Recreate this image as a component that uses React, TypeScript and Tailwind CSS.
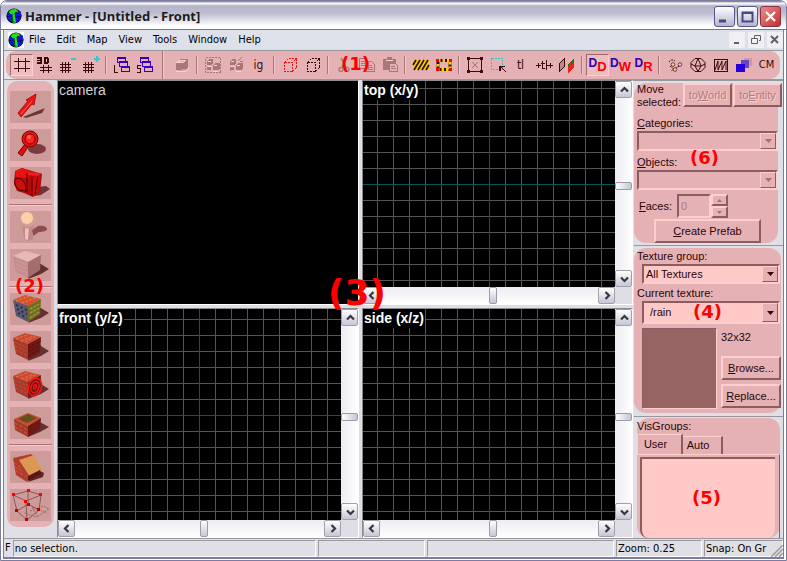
import React from "react";

const TAHOMA = "font-['DejaVu_Sans_Condensed','Noto_Sans',sans-serif]";

type Children = { children?: React.ReactNode };

/* ---------- shared drawing helpers ---------- */

function Ico({ children, size = 18, soft = false }: Children & { size?: number; soft?: boolean }) {
  return (
    <svg
      width={size}
      height={size}
      viewBox={`0 0 ${size} ${size}`}
      fill="none"
      shapeRendering={soft ? "auto" : "crispEdges"}
      aria-hidden="true"
      className="shrink-0"
    >
      {children}
    </svg>
  );
}

function Logo({ boxed = false }: { boxed?: boolean }) {
  return (
    <svg width="16" height="16" viewBox="0 0 16 16" aria-hidden="true" className={boxed ? "shrink-0 bg-white" : "shrink-0"}>
      <circle cx="8" cy="8" r="7.6" fill="#0a0a14" />
      <path d="M1.500 5L5 6v3L1 8zM9 6l5.500-3 1 5-6 1zM1 9l5 0v5L2.500 12zM9 10l6-1-1 3-3 2.500-2 .5z" fill="#1414e0" />
      <path d="M2.500 4.500 5 1.500 10 1l2.500 2.500-1 1.500-2-1L8.500 5l1.500 9.500-3.500.5L5.500 6.500z" fill="#17e020" />
      <path d="M6 6l1 9M9 5l3-1" stroke="#000" strokeWidth=".7" />
    </svg>
  );
}

/* ---------- toolbar icons ---------- */

const D = "#3a0a0c";

function GridIcon() {
  return (
    <Ico>
      <path d="M5.500 2v14M12.500 2v14M1 5.500h16M1 12.500h16" stroke={D} />
    </Ico>
  );
}
function Grid3DIcon() {
  return (
    <Ico>
      <path d="M1 1h5v7H1zM8 1h4v7H8z" fill={D} />
      <path d="M1 3.500h3M1 5.500h3M10 3v3M6.500 4v1" stroke="#e6b1b4" />
      <path d="M12 2h1v5h-1z" fill={D} />
      <path d="M7.500 9v8M12.500 9v8M4 11.500h12M4 14.500h12" stroke={D} />
    </Ico>
  );
}
function GridStepIcon({ plus = false }: { plus?: boolean }) {
  return (
    <Ico>
      <path d="M3.500 6v11M6.500 6v11M9.500 6v11M1 8.500h11M1 11.500h11M1 14.500h11" stroke={D} />
      <path d={plus ? "M12 3h6M15 0v6" : "M12 3h5"} stroke="#25cfd6" strokeWidth="2" />
    </Ico>
  );
}
function WindowsIcon({ load = false }: { load?: boolean }) {
  return (
    <Ico>
      <rect x="4.500" y="1.500" width="8" height="5" fill="#e6b1b4" stroke="#3600b8" />
      <rect x="6.500" y="5.500" width="8" height="5" fill="#e6b1b4" stroke="#3600b8" />
      <rect x="8.500" y="10.500" width="8" height="5" fill="#e6b1b4" stroke="#3600b8" />
      <path d="M4 2h9M6 6h9M8 11h9" stroke="#3600b8" strokeWidth="2" />
      <path d={load ? "M1.500 9v7.500H5" : "M5 9.500H1.500v3h3v4H1"} stroke={D} />
    </Ico>
  );
}
const G = "#a87878";
function SolidBoxIcon() {
  return (
    <Ico>
      <path d="M4 6l3-3h8v8l-3 3H3V9z" fill={G} />
      <path d="M5 6h6l2-2H8zM3 15h10l3-3" fill="#d8a0a0" stroke="#ffd0d0" />
    </Ico>
  );
}
function GroupIcon({ apart = false }: { apart?: boolean }) {
  return (
    <Ico>
      {!apart && <rect x="1.500" y="1.500" width="15" height="15" stroke={G} strokeDasharray="2 1" />}
      <path d="M3 5l2-2h4v4L7 9H3zM9 9l2-2h5v5l-2 2H9z" fill={G} />
      <path d="M3 11h4v3H3z" fill={G} />
      <path d="M4 5h3M10 9h3M4 10h3M9 15h5" stroke="#ffd0d0" />
      {apart && <path d="M11 5l4-4M3 15l4-4M13 5h3M3 12h3" stroke={G} />}
    </Ico>
  );
}
function DashedCubeIcon({ color }: { color: string }) {
  return (
    <Ico>
      <path d="M3.500 6.500h8v9h-8zM3.500 6.500l4-4h8l-4 4M15.500 2.500v9l-4 4" stroke={color} strokeDasharray="2 1" />
    </Ico>
  );
}
function CutIcon() {
  return (
    <Ico soft>
      <path d="M6 2l5 9M12 2l-5 9" stroke={G} strokeWidth="1.500" />
      <circle cx="6" cy="13.500" r="2" stroke={G} strokeWidth="1.300" />
      <circle cx="12" cy="13.500" r="2" stroke={G} strokeWidth="1.300" />
    </Ico>
  );
}
function CopyIcon() {
  return (
    <Ico>
      <path d="M1.500 2.500h6l3 3v7h-9zM8.500 5.500h5l3 3v7h-8z" fill="#e6b1b4" stroke={G} />
      <path d="M3 5.500h4M3 7.500h4M3 9.500h4M10 9.500h4M10 11.500h5M10 13.500h5" stroke={G} />
    </Ico>
  );
}
function PasteIcon() {
  return (
    <Ico>
      <path d="M2 3h13v11H2zM6 1h5v3H6z" fill={G} />
      <path d="M8.500 7.500h6l2 2v6h-8z" fill="#e6b1b4" stroke={G} />
      <path d="M10 10.500h4M10 12.500h5" stroke={G} />
      <path d="M5 4.500h7" stroke="#ffd0d0" />
    </Ico>
  );
}
function HazardIcon({ handles = false }: { handles?: boolean }) {
  return (
    <Ico soft>
      {handles ? (
        <>
          <path d="M3 4.500h12v9H3z" stroke="#2b1400" strokeWidth="3" />
          <path d="M3 4.500h12v9H3z" stroke="#ffcc08" strokeWidth="3" strokeDasharray="2.500 2" />
          <path d="M1 3h3v3H1zM14 3h3v3h-3zM1 12h3v3H1zM14 12h3v3h-3z" fill="#f00" />
        </>
      ) : (
        <>
          <path d="M1 4h16v10H1z" fill="#ffcc08" />
          <path d="M1 9l3-5M2 14l6-10M6 14l6-10M10 14l6-10M14 14l3-5" stroke="#2b1400" strokeWidth="1.700" />
        </>
      )}
    </Ico>
  );
}
function ScaleIcon() {
  return (
    <Ico>
      <rect x="2.500" y="2.500" width="13" height="13" stroke={D} />
      <path d="M1 1h3v3H1zM14 1h3v3h-3zM1 14h3v3H1zM14 14h3v3h-3z" fill={D} />
      <path d="M6 6l6 6M12 6l-6 6" stroke={G} />
    </Ico>
  );
}
function MarqueeIcon() {
  return (
    <Ico>
      <rect x="2.500" y="2.500" width="11" height="11" stroke="#18cdd2" strokeDasharray="2 1" />
      <path d="M11 10l6 6M11 10v5M11 10.500h5" stroke={D} strokeWidth="1.300" />
    </Ico>
  );
}
function FlipIcon() {
  return (
    <Ico>
      <path d="M1.500 7.500l5-5v8l-5 5z" fill="#b98a8c" stroke={D} />
      <path d="M10 8l6-6v9l-6 6z" fill="#1c7a10" />
      <path d="M10 12l3-7v4l3-2v4l-6 6z" fill="#f02020" />
    </Ico>
  );
}
function LetterIcon({ letter }: { letter: string }) {
  return (
    <span className="flex h-[18px] items-start font-['Liberation_Sans',sans-serif] font-bold">
      <span className="text-[12px] leading-[14px] text-[#2a00b8]">D</span>
      <span className="mt-1 text-[13px] leading-[14px] text-[#f50008]">{letter}</span>
    </span>
  );
}
function MoleculeIcon() {
  return (
    <Ico soft>
      <path d="M3 6c2-3 4-2 6-1M4 10l4 3 7-4M8 13l-3 2" stroke={D} strokeDasharray="2 1" />
      <circle cx="7" cy="8.500" r="1.800" fill="#ffd0a0" stroke={D} strokeWidth=".7" />
      <circle cx="14" cy="8.500" r="1.800" fill="#f4c0e0" stroke={D} strokeWidth=".7" />
      <circle cx="9" cy="13.500" r="1.800" fill="#ffd0a0" stroke={D} strokeWidth=".7" />
    </Ico>
  );
}
function SphereIcon() {
  return (
    <Ico soft>
      <path d="M6 2.500h6l4 4v5l-4 4H6l-4-4v-5zM2 8l4 2h6l4-2M6 10l3-7.500 3 7.500-3 5.500z" stroke={D} />
    </Ico>
  );
}
function WaveBoxIcon() {
  return (
    <Ico soft>
      <rect x="2.500" y="3.500" width="13" height="12" stroke={D} />
      <path d="M3 14l3-9v9l4-9v9l4-9v9" stroke={D} />
    </Ico>
  );
}
function FadeIcon() {
  return (
    <Ico>
      <path d="M9 2h8v8H9z" fill="#c89aaa" />
      <path d="M6 4h8v8H6z" fill="#6a46c0" />
      <path d="M1 8h9v8H1z" fill="#2600d8" />
    </Ico>
  );
}

/* ---------- toolbar ---------- */

function ToolButton({ label, active = false, disabled = false, children }: Children & { label: string; active?: boolean; disabled?: boolean }) {
  return (
    <button
      type="button"
      aria-label={label}
      aria-pressed={active}
      disabled={disabled}
      className={
        active
          ? "flex h-[22px] w-[23px] shrink-0 items-center justify-center border border-b-[#ffd0cf] border-l-[#9a6a6c] border-r-[#ffd0cf] border-t-[#9a6a6c] bg-[#eebdbe]"
          : "flex h-[22px] w-[23px] shrink-0 items-center justify-center text-[12px] text-[#3a0a0c]"
      }
    >
      {children}
    </button>
  );
}

function Sep() {
  return (
    <span className="flex h-[18px] w-2 shrink-0 justify-center">
      <span className="w-[2px] border-l border-r border-l-[#a87678] border-r-[#f6c6c6]" />
    </span>
  );
}

function Toolbar() {
  return (
    <div className="relative shrink-0 border-b border-t border-[#97979c] bg-[#e4e4ea] px-[2px]">
      <div className="mr-px flex h-7 items-center overflow-hidden rounded-[10px] bg-[#e6b1b4] pl-1">
        <ToolButton label="Toggle grid" active><GridIcon /></ToolButton>
        <ToolButton label="Toggle 3D grid"><Grid3DIcon /></ToolButton>
        <ToolButton label="Smaller grid"><GridStepIcon /></ToolButton>
        <ToolButton label="Larger grid"><GridStepIcon plus /></ToolButton>
        <Sep />
        <ToolButton label="Load window state"><WindowsIcon load /></ToolButton>
        <ToolButton label="Save window state"><WindowsIcon /></ToolButton>
        <span className="flex w-[14px] shrink-0 justify-center self-stretch">
          <span className="w-[2px] border-l border-r border-l-[#a87678] border-r-[#f6c6c6]" />
        </span>
        <ToolButton label="Carve" disabled><SolidBoxIcon /></ToolButton>
        <Sep />
        <ToolButton label="Group" disabled><GroupIcon /></ToolButton>
        <ToolButton label="Ungroup" disabled><GroupIcon apart /></ToolButton>
        <ToolButton label="Ignore groups">ig</ToolButton>
        <Sep />
        <ToolButton label="Hide selected"><DashedCubeIcon color="#f01010" /></ToolButton>
        <ToolButton label="Hide unselected"><DashedCubeIcon color={D} /></ToolButton>
        <Sep />
        <ToolButton label="Cut" disabled><CutIcon /></ToolButton>
        <ToolButton label="Copy" disabled><CopyIcon /></ToolButton>
        <ToolButton label="Paste" disabled><PasteIcon /></ToolButton>
        <Sep />
        <ToolButton label="Cordon"><HazardIcon /></ToolButton>
        <ToolButton label="Edit cordon"><HazardIcon handles /></ToolButton>
        <Sep />
        <ToolButton label="Select by handles"><ScaleIcon /></ToolButton>
        <ToolButton label="Auto select"><MarqueeIcon /></ToolButton>
        <ToolButton label="Texture lock">tl</ToolButton>
        <ToolButton label="Scaling texture lock">
          <svg width="18" height="12" viewBox="0 0 18 12" fill="none" aria-hidden="true" shapeRendering="crispEdges">
            <path d="M1 6.500h5M3.500 4v5M7.500 2v8M6 4.500h4M7 9.500h3M11.500 1v10M12 6.500h6M15.500 4v5" stroke={D} />
          </svg>
        </ToolButton>
        <ToolButton label="Face alignment"><FlipIcon /></ToolButton>
        <Sep />
        <ToolButton label="Displacement draw" active><LetterIcon letter="D" /></ToolButton>
        <ToolButton label="Displacement walkable"><LetterIcon letter="W" /></ToolButton>
        <ToolButton label="Displacement remove"><LetterIcon letter="R" /></ToolButton>
        <Sep />
        <ToolButton label="Helpers"><MoleculeIcon /></ToolButton>
        <ToolButton label="Models"><SphereIcon /></ToolButton>
        <ToolButton label="Collision"><WaveBoxIcon /></ToolButton>
        <ToolButton label="Detail fade"><FadeIcon /></ToolButton>
        <ToolButton label="Color models"><span className="text-[11px]">CM</span></ToolButton>
      </div>
      <Mark n={1} place="left-[337px] top-[3px] text-[18px]" />
    </div>
  );
}

function Mark({ n, place }: { n: number; place: string }) {
  return (
    <span className={`pointer-events-none absolute z-10 font-['DejaVu_Sans',sans-serif] font-bold leading-[1.1] text-[#ff0000] ${place}`}>
      ({n})
    </span>
  );
}

/* ---------- left tool palette ---------- */

function Cube({ top, left, right, children }: Children & { top: string; left: string; right: string }) {
  return (
    <>
      <path d="M26 12l13 8-8 5-13 5z" fill="#663032" />
      <path d="M3 7l12-5 16 4-13 7z" fill={top} />
      <path d="M3 7l15 6v16L6 23z" fill={left} />
      <path d="M18 13l13-7-1 15-12 8z" fill={right} />
      {children}
    </>
  );
}

const bricks = (
  <g strokeWidth=".8" strokeDasharray="3 1.500">
    <path d="M4 11l14 6M5 15l13 6M6 19l12 6" stroke="#c8523a" />
    <path d="M18 17l13-7M18 21l13-7M18 25l12-7" stroke="#4c0c0c" />
    <path d="M6 8l13-5M11 10l13-5M15 11l12-6" stroke="#e88048" />
  </g>
);

const tools: Record<string, React.ReactNode> = {
  Selection: (
    <>
      <path d="M13 26l12-5 10-4-3 5-16 5z" fill="#703537" />
      <path d="M8 22l10-12-2-1 10-6-2 11-2-1-11 13z" fill="#f01414" stroke="#900" strokeWidth=".8" />
      <path d="M11 23l11-13" stroke="#ff7060" />
    </>
  ),
  Magnify: (
    <>
      <ellipse cx="27" cy="20" rx="9" ry="5" fill="#7c3c3e" />
      <path d="M8 24l7-9 3 3-6 9z" fill="#e01010" stroke="#800" />
      <circle cx="20" cy="10" r="8" fill="#e01414" stroke="#7c0000" />
      <circle cx="20" cy="10" r="5" fill="#f22" stroke="#7c0000" />
      <circle cx="19" cy="8" r="2" fill="#ff6a50" />
    </>
  ),
  Camera: (
    <>
      <path d="M28 20l8-1 4 3-9 6-6 1z" fill="#703537" />
      <path d="M5 4l7-3 20 6-2 18-7 5-9-4-7-2-3-7z" fill="#b00a0a" />
      <path d="M5 4l7-3 9 4-3 6-12-1z" fill="#e81414" />
      <path d="M17 5l15 1-4 3-10-1z" fill="#ee2020" />
      <path d="M5 12c6-2 11 2 11 12l-6-1c-4-2-6-6-5-11z" fill="#cc1010" stroke="#500" />
      <path d="M22 10l9-2-3 17-6 4z" fill="#c80c0c" />
      <path d="M17 6v19M22 10v19M28 9l-3 18" stroke="#5a0000" />
    </>
  ),
  Entity: (
    <>
      <path d="M22 19l6-4c5-1 9 1 9 3s-4 3-8 3l-6 4z" fill="#7c3c3e" opacity=".8" />
      <path d="M13 15h11l-2 5 1 8-4 2-5-2-1-8z" fill="#c08888" />
      <path d="M15 15h4l-1 14-3-1z" fill="#efc2be" />
      <ellipse cx="18" cy="15" rx="6" ry="2.500" fill="#c99090" />
      <circle cx="18" cy="8" r="7.500" fill="#d6a092" />
      <circle cx="17" cy="7" r="6" fill="#ffcfab" />
    </>
  ),
  Block: <Cube top="#eab7b7" left="#c58e90" right="#a56c6e"><path d="M6 11l11 5M6 15l11 5M7 19l10 5" stroke="#dba6a6" strokeDasharray="1 1" /></Cube>,
  "Texture application": (
    <Cube top="#d4522e" left="#5a5870" right="#6c6c20">
      <path d="M6 12l11 5M7 16l10 5M8 20l9 5" stroke="#2c2c4c" strokeWidth="2" strokeDasharray="2 3" />
      <path d="M20 16l9-5M20 20l9-5M20 25l9-6" stroke="#a09838" strokeWidth="1.500" strokeDasharray="3 1" />
      <path d="M6 8l13-5M12 10l13-5" stroke="#f09050" strokeDasharray="2 2" />
    </Cube>
  ),
  "Apply texture": <Cube top="#cc4a30" left="#a83a2c" right="#6e1814">{bricks}</Cube>,
  Decal: (
    <Cube top="#cc4a30" left="#a83a2c" right="#6e1814">
      {bricks}
      <g stroke="#ff1010" strokeWidth="1.500" transform="rotate(20 25 18)">
        <ellipse cx="25" cy="18" rx="6.500" ry="9" />
        <ellipse cx="25" cy="18" rx="3.800" ry="5.800" />
        <ellipse cx="25" cy="18" rx="1.200" ry="2.300" />
      </g>
    </Cube>
  ),
  Overlay: (
    <>
      <path d="M28 14l11 6-9 5-12 5z" fill="#663032" />
      <path d="M4 12l14-6 13 5-13 8z" fill="#cc4a30" />
      <path d="M8 12l10-5 9 4-10 5z" fill="#62511c" />
      <path d="M4 12l14 7v11L5 23z" fill="#a83a2c" />
      <path d="M18 19l13-8-1 11-12 8z" fill="#6e1814" />
      <path d="M5 16l13 7M5 20l13 7" stroke="#d8603f" strokeWidth=".8" strokeDasharray="3 2" />
    </>
  ),
  Clipping: (
    <>
      <path d="M28 19l6 3-1 4-15 5z" fill="#5c2628" />
      <path d="M3 7l18-4 3 3-14 4 11 14-4 7-11-7z" fill="#b03c2c" />
      <path d="M9 9l15-5 8 15-12 7z" fill="#dc9750" />
      <path d="M18 25l12-6 1 4-13 7z" fill="#5c1612" />
      <path d="M4 12l8 5M5 16l9 5M6 20l11 6" stroke="#dc6040" strokeWidth=".8" strokeDasharray="3 2" />
    </>
  ),
  Vertex: (
    <>
      <path d="M20 22l13-5 6 3-12 8-13-4M28 28l-6-10 15 6" stroke="#a06a6c" strokeDasharray="2 1" />
      <path d="M3 6l15-4 13 4-15 6zM3 6l4 16 10 9 12-10 2-15M16 12l1 19M18 2v13l11 6M18 15L7 22" stroke="#8a5658" />
      <path d="M2 4h3v3H2zM17 0h3v3h-3zM29 4h3v3h-3zM14 11h3v3h-3z" fill="#f00" />
      <path d="M5 20h3v3H5zM17 14h3v3h-3zM27 19h3v3h-3zM15 29h3v3h-3z" fill="#c40000" />
    </>
  ),
};

const paletteGroups = [
  ["Selection", "Magnify", "Camera"],
  ["Entity", "Block"],
  ["Texture application", "Apply texture", "Decal", "Overlay"],
  ["Clipping", "Vertex"],
];

function Palette() {
  return (
    <aside className="w-[53px] shrink-0 bg-[#e0dfe6] px-[3px] pt-px">
      <div className="relative flex flex-col gap-[6px] rounded-[10px] bg-[#e6b1b4] px-[3px] pb-[6px] pt-[10px]">
        {paletteGroups.map((group, i) => (
          <React.Fragment key={group[0]}>
            {i > 0 && <hr className="-mx-px -my-px h-[2px] border-b border-t border-b-[#f8c8c8] border-t-[#a87474]" />}
            {group.map((name) => (
              <button key={name} type="button" aria-label={name} className="h-8 w-full bg-[#ce9b9b]">
                <svg width="40" height="32" viewBox="0 0 40 32" fill="none" aria-hidden="true">{tools[name]}</svg>
              </button>
            ))}
          </React.Fragment>
        ))}
        <Mark n={2} place="left-[8px] top-[195px] text-[18px]" />
      </div>
    </aside>
  );
}

/* ---------- viewports ---------- */

const arrows = {
  up: "M5 9.500l3.500-3.500L12 9.500",
  down: "M5 6.500l3.500 3.500L12 6.500",
  left: "M9.500 4L6 7.500 9.500 11",
  right: "M6.500 4l3.500 3.500L6.500 11",
};

function ScrollArrow({ dir }: { dir: keyof typeof arrows }) {
  return (
    <button
      type="button"
      aria-label={`Scroll ${dir}`}
      className="flex h-[17px] w-[17px] shrink-0 items-center justify-center rounded-[2px] border border-[#a0a0ac] bg-linear-to-b from-white to-[#c6c6d6]"
    >
      <svg width="16" height="15" viewBox="0 0 16 15" fill="none" aria-hidden="true" className="shrink-0">
        <path d={arrows[dir]} stroke="#38383c" strokeWidth="2.200" />
      </svg>
    </button>
  );
}

function VBar() {
  return (
    <div className="flex w-[17px] flex-col bg-linear-to-r from-[#ececf2] to-white">
      <ScrollArrow dir="up" />
      <div className="flex flex-1 flex-col justify-center pt-1">
        <button type="button" aria-label="Vertical scroll thumb" className="h-2 w-full rounded-[2px] border border-[#9c9ca8] bg-linear-to-r from-white to-[#c6c6d6]" />
      </div>
      <ScrollArrow dir="down" />
    </div>
  );
}

function HBar() {
  return (
    <div className="flex h-[17px] bg-linear-to-b from-[#ececf2] to-white">
      <ScrollArrow dir="left" />
      <div className="flex flex-1 justify-center pl-2">
        <button type="button" aria-label="Horizontal scroll thumb" className="h-full w-2 rounded-[2px] border border-[#9c9ca8] bg-linear-to-b from-white to-[#c6c6d6]" />
      </div>
      <ScrollArrow dir="right" />
    </div>
  );
}

const frame = "min-w-0 border border-b-white border-l-[#8c8c90] border-r-white border-t-[#8c8c90]";

function GridView({ title, origin, axisX, axisY }: { title: string; origin: string; axisX: string; axisY: string }) {
  return (
    <section className={`${frame} grid grid-cols-[1fr_17px] grid-rows-[1fr_17px] bg-[#dfdee5]`}>
      <div
        className={`relative overflow-hidden bg-black bg-[linear-gradient(to_right,#545454_1px,transparent_1px),linear-gradient(to_bottom,#545454_1px,transparent_1px)] bg-[length:16px_16px] ${origin}`}
      >
        <span className={`absolute inset-y-0 w-px bg-[#005c5c] ${axisX}`} />
        <span className={`absolute inset-x-0 h-px bg-[#005c5c] ${axisY}`} />
        <h2 className="relative inline-block bg-black px-px text-[14px] font-bold leading-[19px] text-white">{title}</h2>
      </div>
      <VBar />
      <HBar />
    </section>
  );
}

function Viewports() {
  return (
    <main className="relative grid min-w-0 flex-1 grid-cols-[302fr_271fr] grid-rows-[225fr_230fr] gap-[3px] bg-[#dfdee5] font-['Liberation_Sans',Arial,sans-serif]">
      <section className={`${frame} bg-black`}>
        <h2 className="px-px text-[14px] leading-[19px] text-[#d4d4d4]">camera</h2>
      </section>
      <GridView title="top (x/y)" origin="bg-position-[14px_7px]" axisX="left-[126px]" axisY="top-[103px]" />
      <GridView title="front (y/z)" origin="bg-position-[13px_10px]" axisX="left-[141px]" axisY="top-[106px]" />
      <GridView title="side (x/z)" origin="bg-position-[14px_10px]" axisX="left-[126px]" axisY="top-[106px]" />
      <Mark n={3} place="left-[271px] top-[193px] text-[36px]" />
    </main>
  );
}

/* ---------- right panel ---------- */

const raised = "border-2 border-b-[#8c5c5e] border-l-[#ffcfcd] border-r-[#8c5c5e] border-t-[#ffcfcd] bg-[#e6b1b4]";
const sunken = "border-2 border-b-[#ffcfcd] border-l-[#8c5c5e] border-r-[#ffcfcd] border-t-[#8c5c5e]";

function PanelButton({ hot, before = "", after, width, disabled = false }: { hot: string; before?: string; after: string; width: string; disabled?: boolean }) {
  return (
    <button
      type="button"
      disabled={disabled}
      className={`${raised} ${width} h-6 shrink-0 whitespace-nowrap ${disabled ? "text-[#aa7c7e] [text-shadow:1px_1px_0_#ffd0d0]" : "text-[#2a0607]"}`}
    >
      {before}
      <u>{hot}</u>
      {after}
    </button>
  );
}

function Combo({ id, value, tall = false, disabled = false }: { id: string; value?: string; tall?: boolean; disabled?: boolean }) {
  return (
    <div className={`relative ${sunken} ${tall ? "h-[23px]" : "h-5"} ${disabled ? "bg-[#e6b1b4]" : "bg-[#ffc9c8]"}`}>
      <select id={id} disabled={disabled} className={`block h-full w-full appearance-none pr-5 text-[#2a0607] outline-none ${tall ? "pl-[6px]" : "pl-[2px]"}`}>
        <option>{value ?? ""}</option>
      </select>
      <span className="pointer-events-none absolute inset-y-0 right-0 flex w-4 items-center justify-center border border-b-[#8c5c5e] border-l-[#ffcfcd] border-r-[#8c5c5e] border-t-[#ffcfcd] bg-[#e6b1b4]">
        <svg width="7" height="4" viewBox="0 0 7 4" aria-hidden="true">
          <path d="M0 0h7L3.500 4z" fill={disabled ? "#a07072" : "#2a0607"} />
        </svg>
      </span>
    </div>
  );
}

function SpinButton({ up = false }: { up?: boolean }) {
  return (
    <button type="button" disabled aria-label={up ? "More faces" : "Fewer faces"} className={`${raised} flex h-3 w-[17px] items-center justify-center`}>
      <svg width="5" height="3" viewBox="0 0 5 3" aria-hidden="true">
        <path d={up ? "M0 3h5L2.500 0z" : "M0 0h5L2.500 3z"} fill="#a07072" />
      </svg>
    </button>
  );
}

function RightPanel() {
  return (
    <aside className="flex w-[150px] shrink-0 flex-col border-t border-[#97979c] bg-[#e0dfe6] pl-px font-['Liberation_Sans',Arial,sans-serif] text-[11px] text-[#2a0607]">
      <section className="relative mr-[5px] mt-[2px] rounded-[12px] bg-[#e6b1b4] pl-[3px]">
        <div className="-mr-1 flex">
          <p className="w-[46px] shrink-0 leading-[13px]">Move selected:</p>
          <PanelButton before="to" hot="W" after="orld" width="w-[49px]" disabled />
          <div className="pl-px"><PanelButton before="to" hot="E" after="ntity" width="w-[49px]" disabled /></div>
        </div>
        <label htmlFor="categories" className="mt-[6px] block leading-4"><u>C</u>ategories:</label>
        <Combo id="categories" disabled />
        <label htmlFor="objects" className="mt-[3px] block leading-4"><u>O</u>bjects:</label>
        <Combo id="objects" disabled />
        <div className="mt-1 flex items-center pl-[2px]">
          <label htmlFor="faces" className="w-[38px]"><u>F</u>aces:</label>
          <input id="faces" defaultValue="0" disabled className={`${sunken} h-6 w-[34px] bg-[#e6b1b4] px-[2px] text-[#aa7c7e]`} />
          <div className="flex flex-col">
            <SpinButton up />
            <SpinButton />
          </div>
        </div>
        <div className="mt-px flex pl-[17px]">
          <PanelButton hot="C" after="reate Prefab" width="w-[107px]" />
        </div>
        <Mark n={6} place="left-[56px] top-[65px] text-[18px]" />
      </section>

      <hr className="my-[2px] border-t border-[#97979c]" />

      <section className="relative mr-[2px] rounded-[12px] bg-[#e6b1b4] pb-1 pl-[3px] pr-px">
        <label htmlFor="texture-group" className="block leading-4">Texture group:</label>
        <div className="pl-[5px]"><Combo id="texture-group" value="All Textures" /></div>
        <label htmlFor="current-texture" className="mt-px block leading-4">Current texture:</label>
        <div className="pl-[5px]"><Combo id="current-texture" value="/rain" tall /></div>
        <div className="-mr-px mt-1 flex gap-1 pl-[5px]">
          <div className="h-[81px] w-[75px] shrink-0 border border-b-[#ffcfcd] border-l-[#8c5c5e] border-r-[#ffcfcd] border-t-[#8c5c5e] bg-[#966463]" />
          <div className="flex flex-1 flex-col gap-1">
            <p className="h-6 leading-[19px]">32x32</p>
            <PanelButton hot="B" after="rowse..." width="w-full" />
            <PanelButton hot="R" after="eplace..." width="w-full" />
          </div>
        </div>
        <Mark n={4} place="left-[59px] top-[54px] text-[18px]" />
      </section>

      <hr className="mb-px mt-[3px] border-t border-[#97979c]" />

      <section className="relative ml-[3px] mr-[3px] flex flex-1 flex-col rounded-[12px] bg-[#e6b1b4]">
        <h3 className="leading-4">VisGroups:</h3>
        <div className="flex items-end" role="tablist">
          <button type="button" role="tab" aria-selected="true" className="h-5 w-[46px] border-l border-r-2 border-t border-l-[#ffcfcd] border-r-[#8c5c5e] border-t-[#ffcfcd] pr-2">User</button>
          <button type="button" role="tab" aria-selected="false" className="h-[18px] w-10 border-r-2 border-t border-r-[#8c5c5e] border-t-[#ffcfcd] pr-2">Auto</button>
        </div>
        <div className="flex flex-1 border-r border-t border-r-[#8c5c5e] border-t-[#ffcfcd] pl-[3px] pr-1 pt-[2px]">
          <div className="flex-1 rounded-b-[8px] border-l-2 border-t-2 border-[#8c5c5e] bg-[#ffc9c8]" />
        </div>
        <Mark n={5} place="left-[55px] top-[70px] text-[18px]" />
      </section>
    </aside>
  );
}

/* ---------- window chrome ---------- */

const captionGlyphs = {
  Minimize: <path d="M4 14h7" stroke="#484880" strokeWidth="3" />,
  Maximize: <path d="M4.500 5.500h10v9h-10zM4 6h11" stroke="#484880" strokeWidth="2" />,
  Close: <path d="M5 5l9 9M14 5l-9 9" stroke="#fff" strokeWidth="2.400" />,
};

function CaptionButton({ name }: { name: keyof typeof captionGlyphs }) {
  return (
    <button
      type="button"
      aria-label={name}
      className={
        name === "Close"
          ? "h-[21px] w-[21px] rounded-[3px] border border-[#8c3048] bg-linear-to-br from-[#e88a8a] to-[#c4282c]"
          : "h-[21px] w-[21px] rounded-[3px] border border-[#585890] bg-linear-to-b from-white to-[#b4b4cc]"
      }
    >
      <svg width="19" height="19" viewBox="0 0 19 19" fill="none" aria-hidden="true">
        {captionGlyphs[name]}
      </svg>
    </button>
  );
}

const mdiGlyphs: Record<string, string> = {
  "Minimize document": "M5 11h5",
  "Restore document": "M6.500 6V3.500h6v5H11M3.500 6.500h6v5h-6z",
  "Close document": "M4 4l7 7M11 4l-7 7",
};

const menus = ["File", "Edit", "Map", "View", "Tools", "Window", "Help"];

function StatusCell({ text = "", width }: { text?: string; width: string }) {
  return (
    <div className={`${width} h-[17px] overflow-hidden whitespace-nowrap border border-b-white border-l-[#9a9aa0] border-r-white border-t-[#9a9aa0] pl-px leading-[16px]`}>
      {text}
    </div>
  );
}

export default function App() {
  return (
    <div className={`flex h-screen w-full flex-col overflow-hidden rounded-t-[7px] border border-[#7c7c9e] bg-white text-[11px] text-black ${TAHOMA}`}>
      <header className="flex h-[29px] shrink-0 items-center gap-[3px] border-b border-[#747496] bg-[linear-gradient(to_bottom,#6c6c94,#ffffff_8%,#b4b4c8_18%,#bebed0_45%,#dcdce6_65%,#ffffff_90%)] pl-[5px] pr-[5px] pt-[2px]">
        <Logo />
        <h1 className="flex-1 font-['Noto_Sans',sans-serif] text-[13px] font-bold leading-5 text-[#1c1c20]">Hammer - [Untitled - Front]</h1>
        <div className="flex gap-[2px]">
          <CaptionButton name="Minimize" />
          <CaptionButton name="Maximize" />
          <CaptionButton name="Close" />
        </div>
      </header>

      <div className="mx-[2px] mb-px flex min-h-0 flex-1 flex-col border-x border-b-2 border-[#7c7c9e] bg-[#e0dfe6]">
        <nav className="flex h-[20px] shrink-0 items-center bg-[#dfe1ea] pl-1">
          <Logo boxed />
          <div className="flex flex-1 gap-px">
            {menus.map((m) => (
              <button key={m} type="button" className="px-[5px]">{m}</button>
            ))}
          </div>
          <div className="flex gap-[3px]">
            {Object.keys(mdiGlyphs).map((name) => (
              <button key={name} type="button" aria-label={name} className="h-4 w-4 bg-[#f0f0f4]">
                <svg width="16" height="16" viewBox="0 0 16 16" fill="none" aria-hidden="true">
                  <path d={mdiGlyphs[name]} stroke="#606068" strokeWidth={name === "Restore document" ? 1 : 2} />
                </svg>
              </button>
            ))}
          </div>
        </nav>

        <Toolbar />

        <div className="flex min-h-0 flex-1">
          <Palette />
          <Viewports />
          <RightPanel />
        </div>

        <footer className="flex h-[19px] shrink-0 items-center gap-[2px] border-t border-[#97979c] bg-[#e0dfe6]">
          <span className="shrink-0 pl-px">F</span>
          <StatusCell text="no selection." width="min-w-0 flex-[306]" />
          <StatusCell width="min-w-0 flex-[106]" />
          <StatusCell width="min-w-0 flex-[187]" />
          <StatusCell text="Zoom: 0.25" width="w-[86px] shrink-0" />
          <div className="relative w-[79px] shrink-0">
            <StatusCell text="Snap: On Gr" width="w-full" />
            <svg width="12" height="12" viewBox="0 0 12 12" aria-hidden="true" className="absolute bottom-0 right-0">
              <path d="M0 12L12 0M4 12l8-8M8 12l4-4" stroke="#9a9aa0" strokeWidth="1.500" />
            </svg>
          </div>
        </footer>
      </div>
    </div>
  );
}
